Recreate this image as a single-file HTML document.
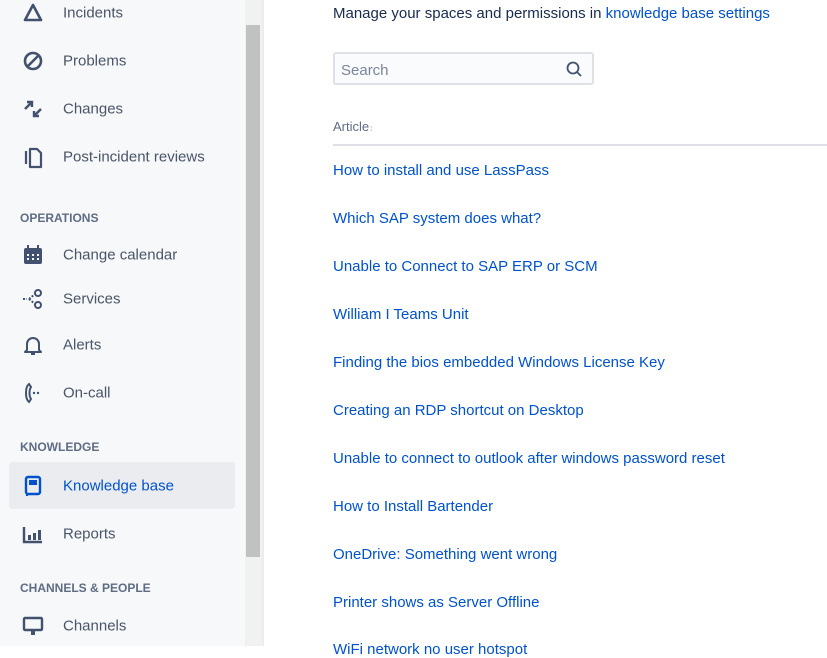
<!DOCTYPE html>
<html><head><meta charset="utf-8"><style>
*{margin:0;padding:0;box-sizing:border-box}
body{width:827px;height:646px;overflow:hidden;background:#fff;font-family:"Liberation Sans",sans-serif;position:relative}
.side{position:absolute;left:0;top:0;width:245px;height:646px;background:#f7f8f9}
.track{position:absolute;left:245px;top:0;width:17px;height:646px;background:#f1f1f1}
.thumb{position:absolute;left:246px;top:25px;width:14px;height:532px;background:#c1c1c1}
.bord{position:absolute;left:262px;top:0;width:2px;height:646px;background:#ebecf0}
.item{position:absolute;left:0;width:245px;height:46px;font-size:15px;color:#4a5568}
.item span{position:absolute;left:63px;top:50%;transform:translateY(-50%)}
.item svg{position:absolute;left:21px;top:50%;transform:translateY(-50%)}
.hd{position:absolute;left:20px;font-size:12px;font-weight:bold;color:#5e6c84}
.sel{position:absolute;left:9px;top:462px;width:226px;height:47px;background:#ebecf0;border-radius:3px}
.main{position:absolute;left:333px}
a{color:#0052cc;text-decoration:none}
.link{position:absolute;left:333px;font-size:15px;color:#0052cc}
</style></head><body>
<div class="side"></div>
<div class="sel"></div>
<div class="item" style="top:-10px"><svg width="24" height="24" viewBox="0 0 24 24"><path d="M12 4L4 19h16z" fill="none" stroke="#42526e" stroke-width="2.6" stroke-linejoin="round"/></svg><span>Incidents</span></div>
<div class="item" style="top:38px"><svg width="24" height="24" viewBox="0 0 24 24"><circle cx="12" cy="12" r="8" fill="none" stroke="#42526e" stroke-width="2.6"/><path d="M7 17L17 7" stroke="#42526e" stroke-width="2.6"/></svg><span>Problems</span></div>
<div class="item" style="top:86px"><svg width="24" height="24" viewBox="0 0 24 24"><path d="M4 12L11 5M6 5h5v5M20 12l-7 7M18 19h-5v-5" fill="none" stroke="#42526e" stroke-width="2.4"/></svg><span>Changes</span></div>
<div class="item" style="top:134px"><svg width="24" height="24" viewBox="0 0 24 24"><path d="M5 6v13M9 4h7l4 4v14H9z" fill="none" stroke="#42526e" stroke-width="2.2" stroke-linejoin="round"/></svg><span>Post-incident reviews</span></div>
<div class="hd" style="top:211px">OPERATIONS</div>
<div class="item" style="top:232px"><svg width="24" height="24" viewBox="0 0 24 24"><rect x="3" y="5" width="18" height="16" rx="2" fill="#42526e"/><rect x="6" y="2" width="2" height="4" fill="#42526e"/><rect x="16" y="2" width="2" height="4" fill="#42526e"/><g fill="#f7f8f9"><rect x="6" y="11" width="2" height="2"/><rect x="11" y="11" width="2" height="2"/><rect x="16" y="11" width="2" height="2"/><rect x="6" y="15" width="2" height="2"/><rect x="11" y="15" width="2" height="2"/><rect x="16" y="15" width="2" height="2"/></g></svg><span>Change calendar</span></div>
<div class="item" style="top:276px"><svg width="24" height="24" viewBox="0 0 24 24"><circle cx="17" cy="6" r="3" fill="none" stroke="#42526e" stroke-width="2"/><circle cx="17" cy="18" r="3" fill="none" stroke="#42526e" stroke-width="2"/><path d="M2 12h4M8 12l6-5M8 12l6 5" stroke="#42526e" stroke-width="2" fill="none" stroke-dasharray="2 1.5"/></svg><span>Services</span></div>
<div class="item" style="top:322px"><svg width="24" height="24" viewBox="0 0 24 24"><path d="M6 17V11a6 6 0 0112 0v6l2 2H4zM10 21h4" fill="none" stroke="#42526e" stroke-width="2" stroke-linejoin="round"/></svg><span>Alerts</span></div>
<div class="item" style="top:370px"><svg width="24" height="24" viewBox="0 0 24 24"><path d="M8 3c-4 3-4 15 0 18l2-3c-2-3-2-9 0-12z" fill="none" stroke="#42526e" stroke-width="2"/><circle cx="13" cy="12" r="1.2" fill="#42526e"/><circle cx="17" cy="12" r="1.2" fill="#42526e"/></svg><span>On-call</span></div>
<div class="hd" style="top:440px">KNOWLEDGE</div>
<div class="item" style="top:463px;color:#0052cc"><svg width="24" height="24" viewBox="0 0 24 24"><rect x="5" y="3" width="14" height="17" rx="2" fill="none" stroke="#0052cc" stroke-width="2.4"/><rect x="8" y="6" width="8" height="5" fill="#0052cc"/><path d="M6 20v2" stroke="#0052cc" stroke-width="2"/></svg><span>Knowledge base</span></div>
<div class="item" style="top:511px"><svg width="24" height="24" viewBox="0 0 24 24"><path d="M3 5v15h18" fill="none" stroke="#42526e" stroke-width="2.4"/><rect x="7" y="13" width="3" height="5" fill="#42526e"/><rect x="12" y="11" width="3" height="7" fill="#42526e"/><rect x="17" y="8" width="3" height="10" fill="#42526e"/></svg><span>Reports</span></div>
<div class="hd" style="top:581px">CHANNELS &amp; PEOPLE</div>
<div class="item" style="top:603px"><svg width="24" height="24" viewBox="0 0 24 24"><rect x="3" y="4" width="18" height="12" rx="1" fill="none" stroke="#42526e" stroke-width="2.4"/><rect x="10" y="16" width="4" height="5" fill="#42526e"/></svg><span>Channels</span></div>
<div class="track"></div><div class="thumb"></div><div class="bord"></div>

<div class="main" style="top:5px;font-size:15px;color:#172b4d">Manage your spaces and permissions in <a>knowledge base settings</a></div>
<div style="position:absolute;left:333px;top:52px;width:261px;height:33px;border:2px solid #dfe1e6;border-radius:3px;background:#fafbfc"></div>
<div style="position:absolute;left:341px;top:62px;font-size:15px;color:#7a869a">Search</div>
<svg style="position:absolute;left:565px;top:60px" width="18" height="18" viewBox="0 0 18 18"><circle cx="8" cy="8" r="5.5" fill="none" stroke="#42526e" stroke-width="1.8"/><path d="M12 12l4 4" stroke="#42526e" stroke-width="1.8"/></svg>
<div style="position:absolute;left:333px;top:119px;font-size:13px;color:#5e6c84">Article<span style="font-size:9px;color:#c1c7d0">&#8597;</span></div>
<div style="position:absolute;left:333px;top:144px;width:494px;height:2px;background:#dfe1e6"></div>
<div class="link" style="top:162px">How to install and use LassPass</div>
<div class="link" style="top:210px">Which SAP system does what?</div>
<div class="link" style="top:258px">Unable to Connect to SAP ERP or SCM</div>
<div class="link" style="top:306px">William I Teams Unit</div>
<div class="link" style="top:354px">Finding the bios embedded Windows License Key</div>
<div class="link" style="top:402px">Creating an RDP shortcut on Desktop</div>
<div class="link" style="top:450px">Unable to connect to outlook after windows password reset</div>
<div class="link" style="top:498px">How to Install Bartender</div>
<div class="link" style="top:546px">OneDrive: Something went wrong</div>
<div class="link" style="top:594px">Printer shows as Server Offline</div>
<div class="link" style="top:641px">WiFi network no user hotspot</div>
</body></html>
